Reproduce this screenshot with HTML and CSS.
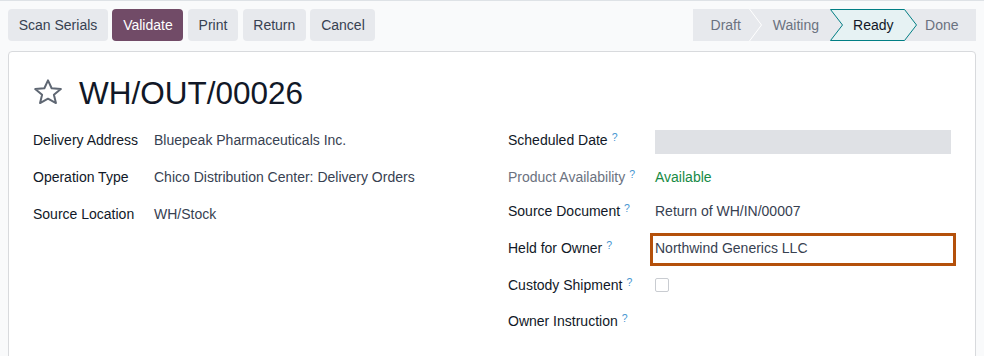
FILE: index.html
```html
<!DOCTYPE html>
<html>
<head>
  <meta charset="utf-8">
  <title>WH/OUT/00026</title>
  <link rel="stylesheet" href="styles.css">
</head>
<body>
  <!-- Top control panel: action buttons + status bar -->
  <div class="control-panel">
    <div class="actions">
      <button class="btn">Scan Serials</button>
      <button class="btn btn-primary">Validate</button>
      <button class="btn">Print</button>
      <button class="btn">Return</button>
      <button class="btn">Cancel</button>
    </div>
    <div class="statusbar">
      <span class="stage stage-draft">Draft</span>
      <svg class="stage-sep" width="13" height="32" viewBox="0 0 13 32">
        <polyline points="0.5,0 12.5,16 0.5,32" fill="none" stroke="#ffffff" stroke-width="1"/>
      </svg>
      <span class="stage stage-waiting">Waiting</span>
      <span class="stage stage-active">
        <svg class="stage-arrow" width="87" height="32" viewBox="0 0 87 32">
          <polygon points="0.5,0.5 74.5,0.5 86.5,16 74.5,31.5 0.5,31.5 12.5,16" fill="#e6f2f3" stroke="#017e84" stroke-width="1"/>
        </svg>
        <span class="stage-label">Ready</span>
      </span>
      <span class="stage stage-done">Done</span>
    </div>
  </div>

  <!-- Form sheet -->
  <div class="sheet">
    <div class="title-row">
      <svg class="star" width="30" height="26" viewBox="0 0 30 28" preserveAspectRatio="none">
        <polygon points="15,1.5 18.64,9.98 27.84,10.83 20.9,16.92 22.94,25.92 15,21.2 7.06,25.92 9.1,16.92 2.16,10.83 11.36,9.98"
                 fill="none" stroke="#5f6773" stroke-width="2" stroke-linejoin="round" vector-effect="non-scaling-stroke"/>
      </svg>
      <h1>WH/OUT/00026</h1>
    </div>

    <div class="groups">
      <div class="group group-left">
        <div class="field-label">Delivery Address</div>
        <div class="field-value">Bluepeak Pharmaceuticals Inc.</div>

        <div class="field-label">Operation Type</div>
        <div class="field-value">Chico Distribution Center: Delivery Orders</div>

        <div class="field-label">Source Location</div>
        <div class="field-value">WH/Stock</div>
      </div>

      <div class="group group-right">
        <div class="field-label">Scheduled Date<sup class="help">?</sup></div>
        <div class="date-bar"></div>

        <div class="field-label muted">Product Availability<sup class="help">?</sup></div>
        <div class="field-value available">Available</div>

        <div class="field-label">Source Document<sup class="help">?</sup></div>
        <div class="field-value">Return of WH/IN/00007</div>

        <div class="field-label">Held for Owner<sup class="help">?</sup></div>
        <div class="owner-box">Northwind Generics LLC</div>

        <div class="field-label">Custody Shipment<sup class="help">?</sup></div>
        <div><span class="checkbox"></span></div>

        <div class="field-label">Owner Instruction<sup class="help">?</sup></div>
        <div class="field-value"></div>
      </div>
    </div>
  </div>
</body>
</html>
```

FILE: styles.css
```css
* {
  box-sizing: border-box;
}

body {
  margin: 0;
  background: #f9fafb;
  border-top: 1px solid #dee2e6;
  font-family: "Liberation Sans", Arial, sans-serif;
  font-size: 14px;
  line-height: 21px;
  color: #374151;
}

/* control panel */

.control-panel {
  display: flex;
  justify-content: space-between;
  align-items: center;
  padding: 8px 8px 0;
}

.actions {
  display: flex;
  gap: 4.5px;
}

.btn {
  height: 32px;
  padding: 0 10.7px;
  border: none;
  border-radius: 4px;
  background: #e7e9ed;
  color: #374151;
  font: inherit;
  cursor: pointer;
}

.btn-primary {
  background: #714b67;
  color: #fff;
}

.statusbar {
  display: flex;
  height: 32px;
  background: #e7e9ed;
}

.stage {
  display: block;
  line-height: 32px;
  color: #6b7280;
}

.stage-sep {
  display: block;
  flex-shrink: 0;
}

.stage-draft {
  padding: 0 8px 0 18px;
}

.stage-waiting {
  padding: 0 11px;
}

.stage-active {
  position: relative;
  width: 87px;
  padding-left: 23px;
  color: #111827;
}

.stage-arrow {
  position: absolute;
  left: 0;
  top: 0;
}

.stage-label {
  position: relative;
}

.stage-done {
  padding: 0 17.5px 0 8px;
}

/* sheet */

.sheet {
  margin: 10px 8px 0;
  min-height: 300px;
  padding: 21px 24px 40px;
  background: #fff;
  border: 1px solid #d8dadd;
  border-radius: 4px;
}

.title-row {
  display: flex;
  align-items: center;
  gap: 16px;
  margin-bottom: 9px;
}

.star {
  display: block;
  margin-top: -3px;
}

h1 {
  margin: 0;
  font-size: 31.5px;
  line-height: 40px;
  font-weight: 400;
  color: #111827;
}

.groups {
  display: grid;
  grid-template-columns: 1fr 1fr;
  column-gap: 32px;
}

.group {
  display: grid;
  align-items: center;
}

.group-left {
  grid-template-columns: 121px 1fr;
  grid-auto-rows: 37px;
}

.group-right {
  grid-template-columns: 147px 1fr;
  grid-template-rows: 37px 36px 32px 42px 32px 40px;
}

.field-label {
  color: #111827;
  white-space: nowrap;
}

.field-label.muted {
  color: #6b7280;
}

.field-value {
  color: #374151;
  white-space: nowrap;
}

.field-value.available {
  color: #178a45;
}

.help {
  margin-left: 4px;
  font-size: 10.5px;
  line-height: 14px;
  vertical-align: top;
  color: #4796d1;
}

.date-bar {
  height: 24px;
  margin-top: 3px;
  background: #dfe1e5;
}

.owner-box {
  height: 33px;
  margin: 3px -5px 0;
  padding: 0 2px 2px;
  border: 3px solid #b4500a;
  line-height: 25px;
  color: #374151;
}

.checkbox {
  display: block;
  width: 14px;
  height: 14px;
  background: #fff;
  border: 1px solid #c9ccd1;
  border-radius: 2px;
}
```
